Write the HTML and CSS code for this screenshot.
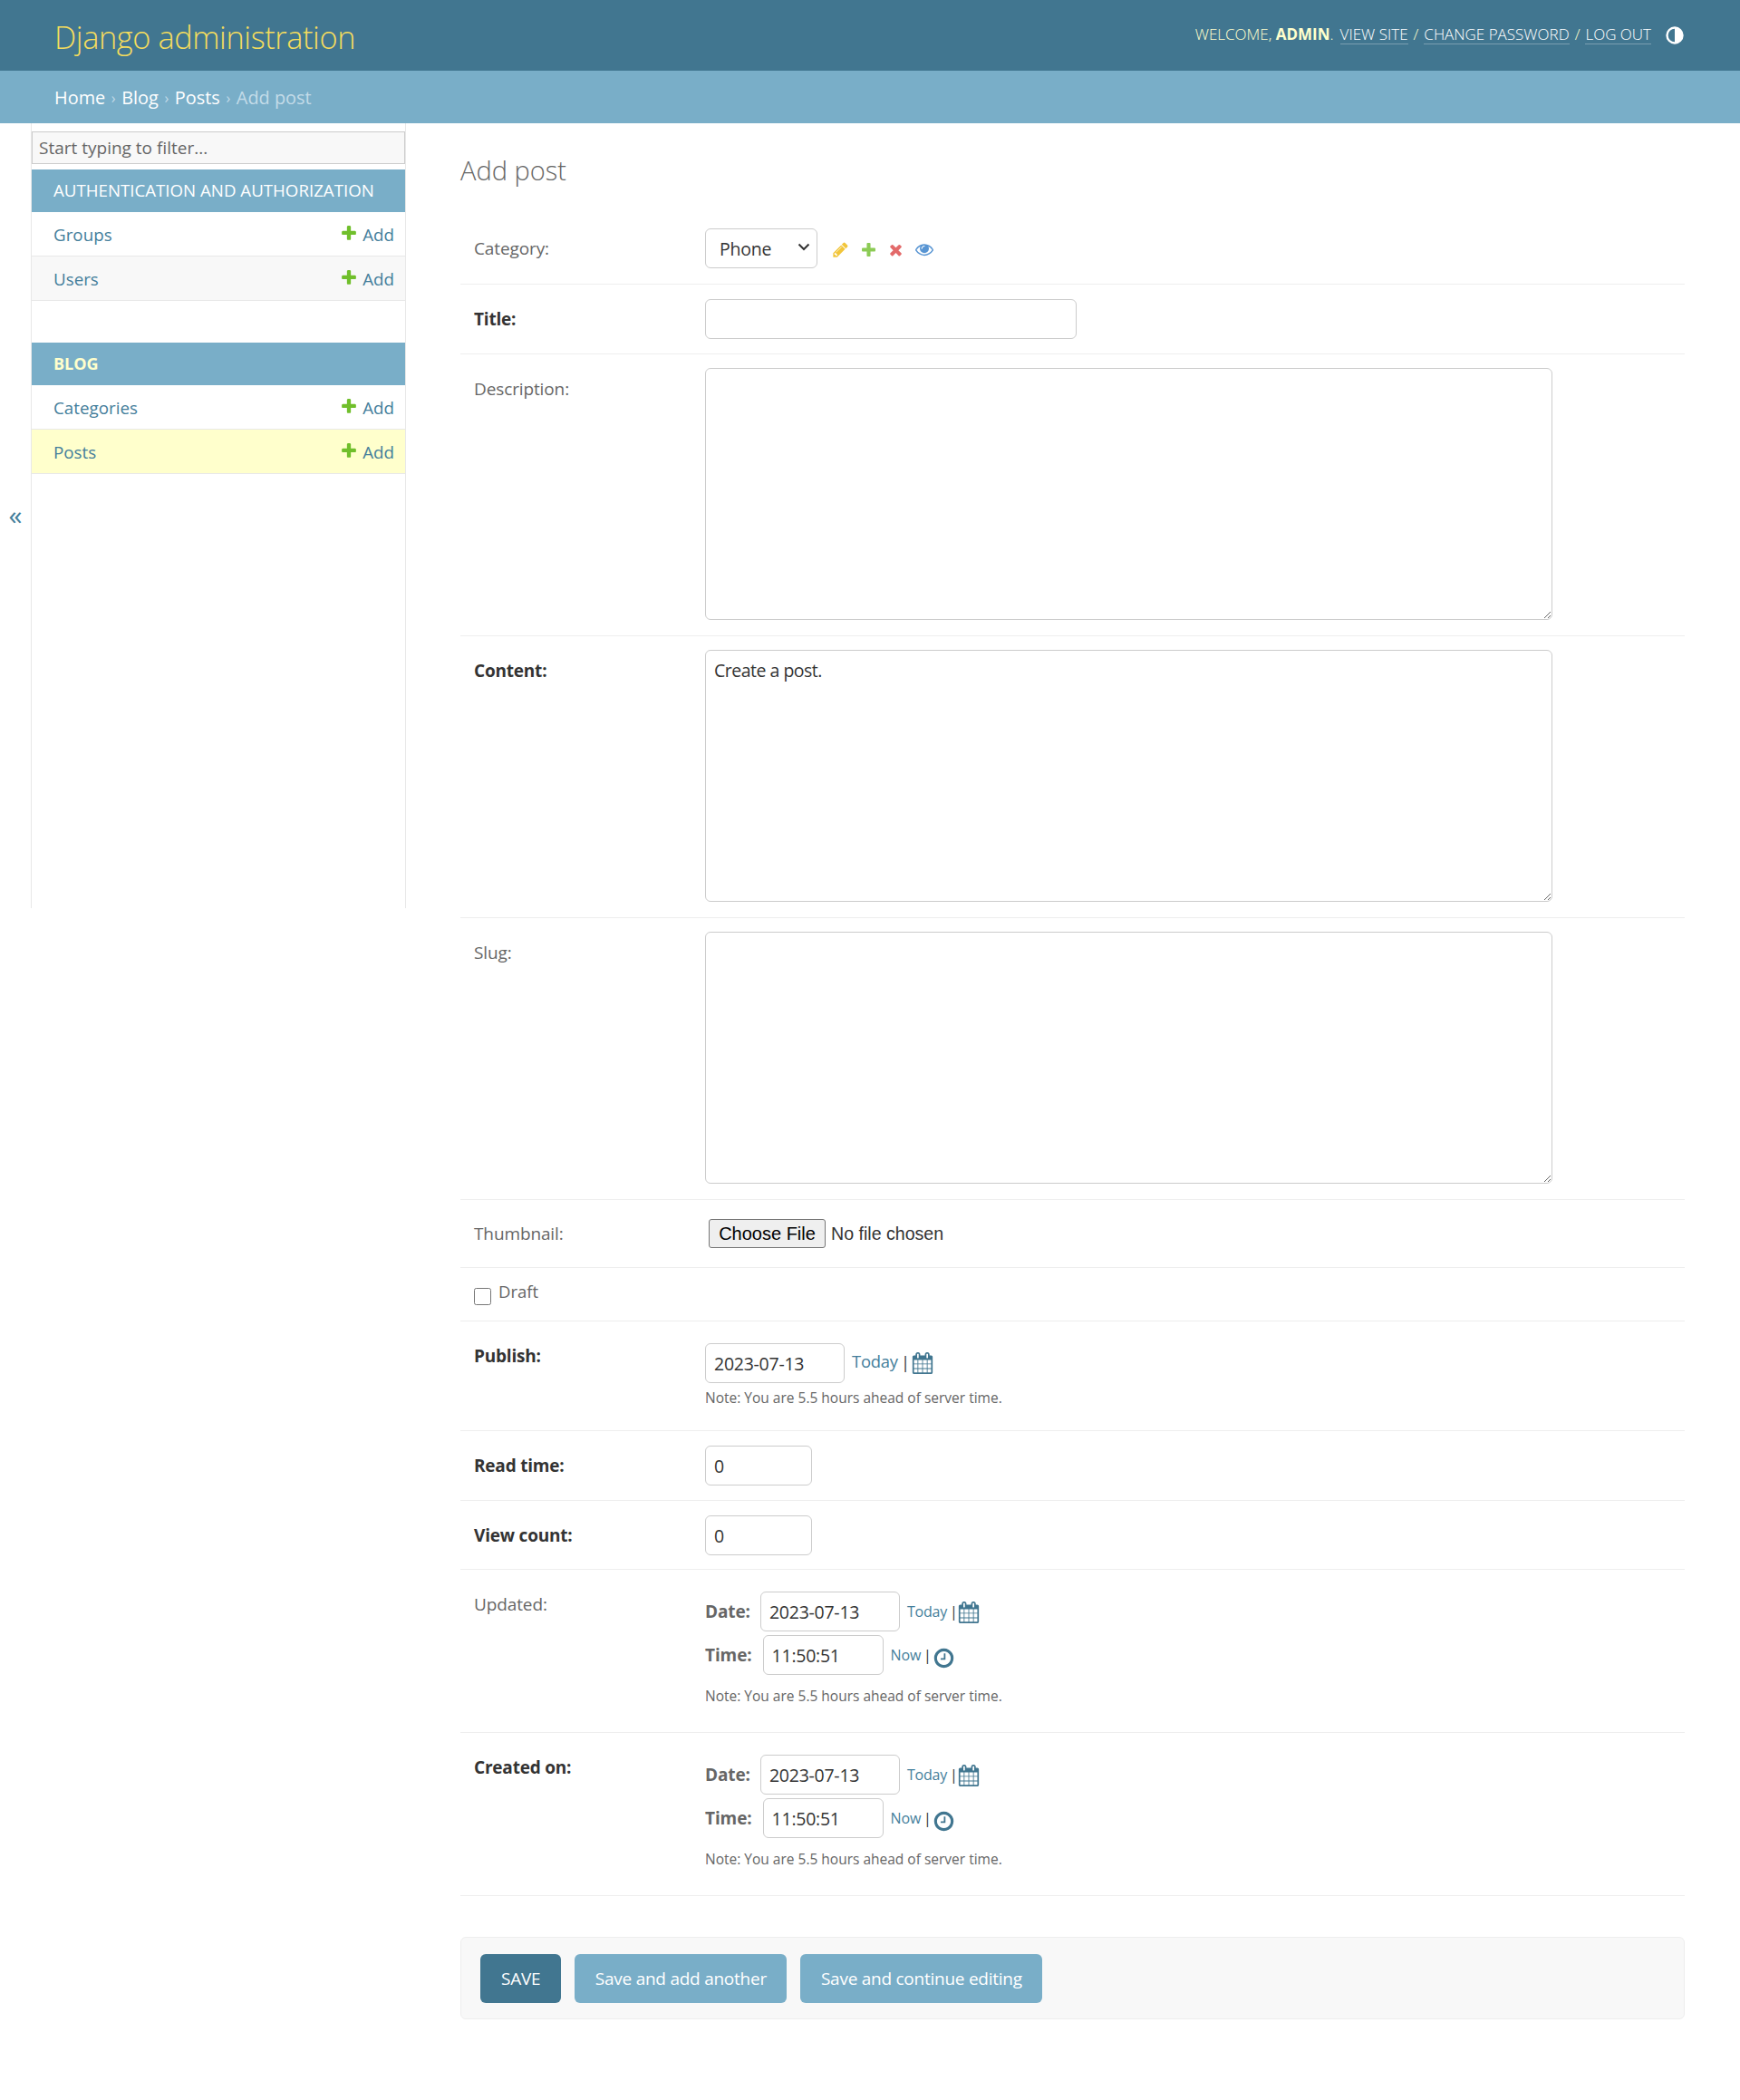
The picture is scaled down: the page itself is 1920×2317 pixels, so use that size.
FILE: index.html
```html
<!DOCTYPE html>
<html lang="en">
<head>
<meta charset="utf-8">
<title>Add post | Django site admin</title>
<link rel="stylesheet" href="styles.css">
</head>
<body>
<svg class="defs" width="0" height="0" aria-hidden="true">
  <symbol id="i-add" viewBox="0 0 1792 1792"><path d="M1600 796v192q0 40-28 68t-68 28h-416v416q0 40-28 68t-68 28h-192q-40 0-68-28t-28-68v-416h-416q-40 0-68-28t-28-68v-192q0-40 28-68t68-28h416v-416q0-40 28-68t68-28h192q40 0 68 28t28 68v416h416q40 0 68 28t28 68z"/></symbol>
  <symbol id="i-change" viewBox="0 0 1792 1792"><path d="M491 1536l91-91-235-235-91 91v107h128v128h107zm523-928q0-22-22-22-10 0-17 7l-542 542q-7 7-7 17 0 22 22 22 10 0 17-7l542-542q7-7 7-17zm-54-192l416 416-832 832h-416v-416zm683 96q0 53-37 90l-166 166-416-416 166-165q36-38 90-38 53 0 91 38l235 234q37 39 37 91z"/></symbol>
  <symbol id="i-delete" viewBox="0 0 1792 1792"><path d="M1490 1322q0 40-28 68l-136 136q-28 28-68 28t-68-28l-294-294-294 294q-28 28-68 28t-68-28l-136-136q-28-28-28-68t28-68l294-294-294-294q-28-28-28-68t28-68l136-136q28-28 68-28t68 28l294 294 294-294q28-28 68-28t68 28l136 136q28 28 28 68t-28 68l-294 294 294 294q28 28 28 68z"/></symbol>
  <symbol id="i-view" viewBox="0 0 1792 1792"><path d="M1664 960q-152-236-381-353 61 104 61 225 0 185-131.500 316.500t-316.500 131.500-316.500-131.500-131.500-316.500q0-121 61-225-229 117-381 353 133 205 333.500 326.500t434.500 121.500 434.500-121.500 333.500-326.500zm-720-384q0-20-14-34t-34-14q-125 0-214.500 89.500t-89.500 214.500q0 20 14 34t34 14 34-14 14-34q0-86 61-147t147-61q20 0 34-14t14-34zm848 384q0 34-20 69-140 230-376.500 368.500t-499.500 138.500-499.500-139-376.500-368q-20-35-20-69t20-69q140-229 376.500-368t499.500-139 499.500 139 376.500 368q20 35 20 69z"/></symbol>
  <symbol id="i-cal" viewBox="0 0 1792 1792"><path d="M192 1664h288v-288h-288v288zm352 0h320v-288h-320v288zm-352-352h288v-320h-288v320zm352 0h320v-320h-320v320zm-352-384h288v-288h-288v288zm736 736h320v-288h-320v288zm-384-736h320v-288h-320v288zm768 736h288v-288h-288v288zm-384-352h320v-320h-320v320zm-352-864v-288q0-13-9.500-22.500t-22.500-9.500h-64q-13 0-22.500 9.500t-9.500 22.500v288q0 13 9.500 22.500t22.500 9.500h64q13 0 22.500-9.500t9.500-22.500zm736 864h288v-320h-288v320zm-384-384h320v-288h-320v288zm384 0h288v-288h-288v288zm32-480v-288q0-13-9.500-22.500t-22.500-9.500h-64q-13 0-22.500 9.500t-9.500 22.500v288q0 13 9.500 22.500t22.500 9.500h64q13 0 22.500-9.500t9.500-22.500zm384-64v1280q0 52-38 90t-90 38h-1408q-52 0-90-38t-38-90v-1280q0-52 38-90t90-38h128v-96q0-66 47-113t113-47h64q66 0 113 47t47 113v96h384v-96q0-66 47-113t113-47h64q66 0 113 47t47 113v96h128q52 0 90 38t38 90z"/></symbol>
  <symbol id="i-clock" viewBox="0 0 1792 1792"><path d="M1024 544v448q0 14-9 23t-23 9h-320q-14 0-23-9t-9-23v-64q0-14 9-23t23-9h224v-352q0-14 9-23t23-9h64q14 0 23 9t9 23zm416 352q0-148-73-273t-198-198-273-73-273 73-198 198-73 273 73 273 198 198 273 73 273-73 198-198 73-273zm224 0q0 209-103 385.500t-279.500 279.500-385.500 103-385.500-103-279.500-279.500-103-385.500 103-385.500 279.500-279.500 385.500-103 385.500 103 279.500 279.500 103 385.500z"/></symbol>
</svg>

<header class="topbar">
  <a class="brand" href="#">Django administration</a>
  <div class="tools">
    <span class="welcome">Welcome, <strong>admin</strong>.</span>
    <a href="#">View site</a> <span>/</span>
    <a href="#">Change password</a> <span>/</span>
    <a href="#">Log out</a>
    <svg class="theme" viewBox="0 0 20 20" width="20" height="22"><circle cx="10" cy="10" r="8.5" fill="none" stroke="#fff" stroke-width="2.4"/><path d="M10 1.5a8.500 8.500 0 0 1 0 17z" fill="#fff"/></svg>
  </div>
</header>

<nav class="crumbs">
  <a href="#">Home</a><span class="sep">›</span><a href="#">Blog</a><span class="sep">›</span><a href="#">Posts</a><span class="sep">›</span><span class="current">Add post</span>
</nav>

<div class="shell">
  <div class="toggle">«</div>
  <aside class="sidebar">
    <input class="filter" type="text" placeholder="Start typing to filter...">
    <section class="app">
      <h2 class="app-title">Authentication and Authorization</h2>
      <div class="model"><a href="#">Groups</a><a class="add" href="#"><svg class="plus"><use href="#i-add"/></svg>Add</a></div>
      <div class="model alt"><a href="#">Users</a><a class="add" href="#"><svg class="plus"><use href="#i-add"/></svg>Add</a></div>
    </section>
    <section class="app">
      <h2 class="app-title active">Blog</h2>
      <div class="model"><a href="#">Categories</a><a class="add" href="#"><svg class="plus"><use href="#i-add"/></svg>Add</a></div>
      <div class="model selected"><a href="#">Posts</a><a class="add" href="#"><svg class="plus"><use href="#i-add"/></svg>Add</a></div>
    </section>
  </aside>

  <main class="main">
    <h1 class="title">Add post</h1>

    <div class="row">
      <label class="lbl lbl-up">Category:</label>
      <div class="field inline">
        <select class="ctl sel"><option>Phone</option></select>
        <span class="rel">
          <svg class="ic yellow"><use href="#i-change"/></svg>
          <svg class="ic green"><use href="#i-add"/></svg>
          <svg class="ic red"><use href="#i-delete"/></svg>
          <svg class="ic blue"><use href="#i-view"/></svg>
        </span>
      </div>
    </div>

    <div class="row">
      <label class="lbl req">Title:</label>
      <div class="field"><input class="ctl w-title" type="text"></div>
    </div>

    <div class="row">
      <label class="lbl">Description:</label>
      <div class="field"><textarea class="ctl area"></textarea></div>
    </div>

    <div class="row">
      <label class="lbl req">Content:</label>
      <div class="field"><textarea class="ctl area">Create a post.</textarea></div>
    </div>

    <div class="row">
      <label class="lbl">Slug:</label>
      <div class="field"><textarea class="ctl area"></textarea></div>
    </div>

    <div class="row row-file">
      <label class="lbl">Thumbnail:</label>
      <div class="field file-field">
        <span class="file-btn">Choose File</span>
        <span class="file-name">No file chosen</span>
      </div>
    </div>

    <div class="row row-check">
      <input class="check" type="checkbox" id="draft">
      <label class="check-lbl" for="draft">Draft</label>
    </div>

    <div class="row row-date">
      <label class="lbl req">Publish:</label>
      <div class="field">
        <div class="inline">
          <input class="ctl w-date" type="text" value="2023-07-13">
          <span class="short big"><a href="#">Today</a> <i>|</i> <svg class="cal-big"><use href="#i-cal"/></svg></span>
        </div>
        <p class="help first">Note: You are 5.5 hours ahead of server time.</p>
      </div>
    </div>

    <div class="row">
      <label class="lbl req">Read time:</label>
      <div class="field"><input class="ctl w-num" type="text" value="0"></div>
    </div>

    <div class="row row-tight">
      <label class="lbl req">View count:</label>
      <div class="field"><input class="ctl w-num" type="text" value="0"></div>
    </div>

    <div class="row row-dt">
      <label class="lbl">Updated:</label>
      <div class="field">
        <div class="inline dt"><b class="dt-lbl">Date:</b><input class="ctl w-date" type="text" value="2023-07-13"><span class="short"><a href="#">Today</a> <i>|</i> <svg class="cal"><use href="#i-cal"/></svg></span></div>
        <div class="inline dt"><b class="dt-lbl">Time:</b><input class="ctl w-time" type="text" value="11:50:51"><span class="short"><a href="#">Now</a> <i>|</i> <svg class="cal clock"><use href="#i-clock"/></svg></span></div>
        <p class="help">Note: You are 5.5 hours ahead of server time.</p>
      </div>
    </div>

    <div class="row row-dt">
      <label class="lbl req">Created on:</label>
      <div class="field">
        <div class="inline dt"><b class="dt-lbl">Date:</b><input class="ctl w-date" type="text" value="2023-07-13"><span class="short"><a href="#">Today</a> <i>|</i> <svg class="cal"><use href="#i-cal"/></svg></span></div>
        <div class="inline dt"><b class="dt-lbl">Time:</b><input class="ctl w-time" type="text" value="11:50:51"><span class="short"><a href="#">Now</a> <i>|</i> <svg class="cal clock"><use href="#i-clock"/></svg></span></div>
        <p class="help">Note: You are 5.5 hours ahead of server time.</p>
      </div>
    </div>

    <div class="submit">
      <button class="btn primary" type="button">SAVE</button>
      <button class="btn" type="button">Save and add another</button>
      <button class="btn" type="button">Save and continue editing</button>
    </div>
  </main>
</div>
</body>
</html>
```

FILE: styles.css
```css
* { box-sizing: border-box; }
html, body { margin: 0; padding: 0; }
body {
  background: #fff;
  color: #333;
  font-family: "Open Sans", "Noto Sans", "Liberation Sans", sans-serif;
  font-size: 20px;
  min-height: 2317px;
}
a { text-decoration: none; color: #447e9b; }
.defs { position: absolute; }

.topbar {
  height: 78px;
  background: #417690;
  display: flex;
  justify-content: space-between;
  align-items: center;
  padding: 0 62px 0 60px;
}
.brand {
  color: #f5dd5d;
  font-size: 34.3px;
  font-weight: 300;
  letter-spacing: -0.4px;
  padding-top: 2px;
}
.tools {
  display: flex;
  align-items: center;
  gap: 6px;
  color: #ffc;
  font-size: 17px;
  font-weight: 300;
  text-transform: uppercase;
  padding-bottom: 3px;
}
.tools a {
  color: #fff;
  border-bottom: 1px solid rgba(255,255,255,.3);
  line-height: 21px;
}
.tools strong { font-weight: 700; }
.welcome { margin-right: 1px; margin-left: -1px; }
.theme { margin-left: 10px; margin-top: 3px; }

.crumbs {
  height: 58px;
  background: #79aec8;
  color: #c4dce8;
  display: flex;
  align-items: center;
  padding-left: 60px;
  padding-top: 1px;
  font-size: 19.9px;
}
.crumbs a { color: #fff; }
.sep { margin: 0 6.6px; font-size: 16px; color: #c4dce8; }
.current { color: #c4dce8; }

.shell { display: flex; align-items: flex-start; }
.toggle {
  width: 34px;
  flex: none;
  padding-top: 412px;
  text-align: center;
  font-size: 30px;
  line-height: 40px;
  color: #447e9b;
}
.sidebar {
  width: 414px;
  flex: none;
  height: 866px;
  border-left: 1px solid #e8e8e8;
  border-right: 1px solid #e8e8e8;
  padding-top: 9px;
}
.filter {
  display: block;
  width: 100%;
  height: 36px;
  background: #f8f8f8;
  border: 1px solid #ccc;
  padding: 0 7px;
  font: inherit;
  font-size: 19px;
  margin-bottom: 6px;
}
.filter::placeholder { color: #666; opacity: 1; }
.app { margin-bottom: 46px; }
.app-title {
  margin: 0;
  height: 47px;
  line-height: 45px;
  background: #79aec8;
  color: #fff;
  font-size: 18.7px;
  font-weight: 400;
  text-transform: uppercase;
  padding-left: 24px;
  white-space: nowrap;
}
.app-title.active { color: #ffc; font-weight: 700; font-size: 18px; line-height: 47px; }
.model {
  height: 49px;
  border-bottom: 1px solid #e8e8e8;
  display: flex;
  align-items: center;
  justify-content: space-between;
  padding: 1px 12px 0 24px;
  font-size: 18.8px;
}
.model > a:first-child { font-weight: 500; }
.model.alt { background: #f8f8f8; }
.model.selected { background: #ffc; }
.add { display: inline-flex; align-items: center; gap: 5px; }
.plus { width: 20px; height: 20px; fill: #70bf2b; margin-top: -4px; }

.main { flex: 1; min-width: 0; padding: 30px 61px 0 60px; }
.title {
  margin: 0 0 28px;
  color: #666;
  font-size: 29px;
  font-weight: 300;
  line-height: 43px;
}

.row {
  display: flex;
  align-items: flex-start;
  padding: 16px 15px;
  border-bottom: 1px solid #eee;
}
.row-tight { padding-bottom: 15px; }
.lbl {
  width: 255px;
  flex: none;
  line-height: 44px;
  font-size: 19px;
  letter-spacing: -0.12px;
  color: #666;
}
.lbl-up { line-height: 42px; }
.lbl.req { color: #333; font-weight: 700; letter-spacing: -0.2px; }
.field { flex: 1; min-width: 0; }
.inline { display: flex; align-items: center; }
.ctl {
  display: block;
  height: 44px;
  border: 1px solid #ccc;
  border-radius: 6px;
  background: #fff;
  color: #333;
  font: inherit;
  font-size: 19.5px;
  letter-spacing: -0.25px;
  padding: 0 9px;
}
.sel {
  width: 124px;
  padding-left: 15px;
  margin-top: -1px;
  margin-bottom: 1px;
  appearance: none;
  background: #fff url("data:image/svg+xml,%3Csvg xmlns='http://www.w3.org/2000/svg' width='14' height='9' viewBox='0 0 14 9'%3E%3Cpath d='M1.500 1.500 7 7l5.500-5.500' fill='none' stroke='%23333' stroke-width='2'/%3E%3C/svg%3E") no-repeat right 7px top 15px;
}
.w-title { width: 410px; }
.area {
  width: 935px;
  height: 278px;
  margin-top: -1px;
  margin-bottom: 1px;
  padding: 8px 9px;
  line-height: 28px;
  letter-spacing: -0.5px;
  resize: both;
}
.w-num { width: 118px; }
.w-date { width: 154px; }
.w-time { width: 133px; }

.rel { display: flex; align-items: center; gap: 11.5px; margin-left: 16px; }
.ic { width: 19px; height: 19px; opacity: .8; }
.yellow { fill: #efb80b; }
.green { fill: #70bf2b; }
.red { fill: #dd4646; }
.blue { fill: #2f7bc9; width: 20px; height: 20px; }

.row-file { padding: 16px 15px; }
.row-file .lbl { line-height: 42px; }
.file-field { display: flex; align-items: center; height: 42px; padding-left: 4px; font-family: "Liberation Sans", Arial, sans-serif; }
.file-btn {
  height: 32px;
  width: 129px;
  border: 1px solid #767676;
  border-radius: 3px;
  background: #efefef;
  color: #000;
  text-align: center;
  line-height: 30px;
  font-size: 20px;
}
.file-name { margin-left: 6px; color: #333; font-size: 19.6px; }

.row-check { padding: 0 15px; height: 59px; align-items: center; }
.check { width: 19px; height: 19px; margin: 5px 8px 0 0; accent-color: #417690; }
.check-lbl { font-size: 18.5px; color: #666; margin-top: -8px; }

.row-date { height: 121px; padding-top: 16px; }
.row-date .field { padding-top: 8px; }
.short { margin-left: 8px; display: inline-flex; align-items: center; gap: 3px; color: #417690; font-size: 16px; letter-spacing: -0.2px; }
.short a { margin-top: -1px; }
.short i { font-style: normal; color: #333; }
.short.big { font-size: 18.4px; margin-top: -4px; }
.cal-big { width: 24px; height: 24px; fill: #417690; margin-top: 3px; margin-left: -1px; }
.cal { width: 24px; height: 24px; fill: #417690; margin-top: 2px; margin-left: -3px; }
.clock { width: 25px; height: 25px; margin-top: 7px; margin-left: -2px; }
.help { margin: 8px 0 0; font-size: 15.5px; line-height: 24px; color: #666; }
.help.first { margin-top: 4px; }

.row-dt { height: 180px; }
.row-dt .field { padding-top: 8px; }
.dt { height: 44px; margin-bottom: 4px; }
.dt-lbl { color: #666; font-size: 19px; font-weight: 700; margin-right: 11px; letter-spacing: -0.1px; }
.dt + .dt .dt-lbl { margin-right: 12px; }
.row-dt .help { margin-top: 11px; }

.submit {
  margin-top: 45px;
  height: 91px;
  border: 1px solid #eee;
  border-radius: 6px;
  background: #f8f8f8;
  display: flex;
  align-items: center;
  gap: 15px;
  padding-left: 21px;
}
.btn {
  height: 54px;
  border: 0;
  border-radius: 6px;
  background: #79aec8;
  color: #fff;
  font: inherit;
  font-size: 19px;
  letter-spacing: -0.25px;
  padding: 0 22.5px;
}
.btn.primary { background: #417690; padding: 0 23px; }
```
